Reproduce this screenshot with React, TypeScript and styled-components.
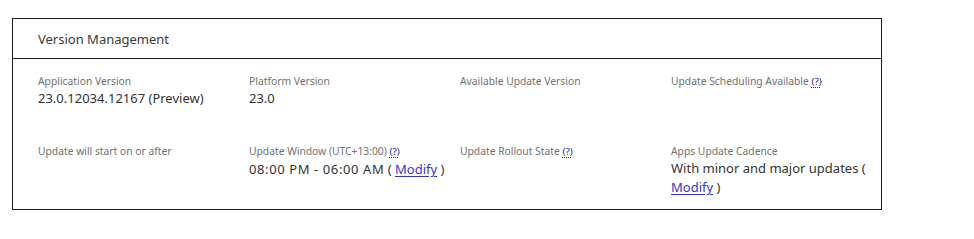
import React from "react";
import styled, { createGlobalStyle } from "styled-components";

const Global = createGlobalStyle`
  html, body { margin: 0; padding: 0; background: #fff; }
  body { font-family: "Noto Sans", "Open Sans", Arial, sans-serif; }
`;

const Card = styled.section`
  box-sizing: border-box;
  width: 870px;
  margin: 18px 0 0 12px;
  border: 1px solid #1a1a1a;
  background: #fff;
`;

const Header = styled.header`
  height: 39px;
  display: flex;
  align-items: center;
  padding-left: 25px;
  border-bottom: 1px solid #1a1a1a;
  font-size: 13px;
  color: #3a3a3a;
`;

const Body = styled.div`
  display: grid;
  grid-template-columns: repeat(4, 211px);
  row-gap: 35px;
  padding: 14px 0 12px 25px;
`;

const Field = styled.div`
  display: flex;
  flex-direction: column;
  padding-right: 4px;
`;

const Label = styled.div`
  font-size: 10.3px;
  line-height: 16px;
  color: #707070;
`;

const Value = styled.div`
  font-size: 13px;
  line-height: 19px;
  color: #333;
`;

const TimeRange = styled.span`
  letter-spacing: 0.6px;
`;

const Help = styled.a`
  font-size: 9.8px;
  color: #23238e;
  text-decoration: underline dotted;
  text-underline-offset: 2px;
  cursor: help;
`;

const ModifyLink = styled.a`
  color: #3535c8;
  text-decoration: underline;
  text-underline-offset: 2px;
  cursor: pointer;
`;

type F = { label: string; help?: boolean; value?: React.ReactNode };

const Modify = () => (
  <>
    ( <ModifyLink href="#">Modify</ModifyLink> )
  </>
);

const fields: F[] = [
  { label: "Application Version", value: "23.0.12034.12167 (Preview)" },
  { label: "Platform Version", value: "23.0" },
  { label: "Available Update Version" },
  { label: "Update Scheduling Available", help: true },
  { label: "Update will start on or after" },
  {
    label: "Update Window (UTC+13:00)",
    help: true,
    value: (
      <>
        <TimeRange>08:00 PM - 06:00 AM</TimeRange> <Modify />
      </>
    ),
  },
  { label: "Update Rollout State", help: true },
  {
    label: "Apps Update Cadence",
    value: (
      <>
        With minor and major updates <Modify />
      </>
    ),
  },
];

export default function App() {
  return (
    <>
      <Global />
      <Card>
        <Header>Version Management</Header>
        <Body>
          {fields.map((f) => (
            <Field key={f.label}>
              <Label>
                {f.label}
                {f.help && (
                  <>
                    {" "}
                    <Help href="#">(?)</Help>
                  </>
                )}
              </Label>
              {f.value && <Value>{f.value}</Value>}
            </Field>
          ))}
        </Body>
      </Card>
    </>
  );
}
